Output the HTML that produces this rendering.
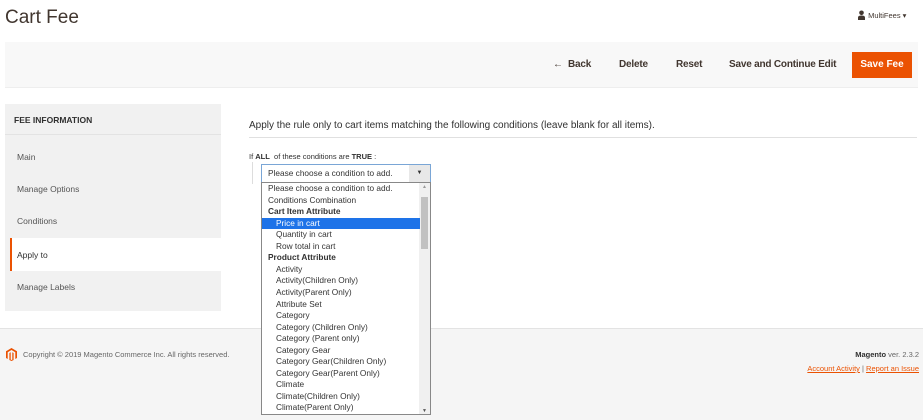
<!DOCTYPE html><html><head><style>
*{margin:0;padding:0;box-sizing:border-box}
body{width:923px;height:420px;overflow:hidden;background:#fff;font-family:"Liberation Sans",sans-serif;color:#303030;position:relative}
.a{position:absolute;white-space:nowrap}
.tb{font-size:10px;color:#41362f;top:59px;font-weight:bold;letter-spacing:-0.2px}
.sb{position:absolute;left:5px;top:104px;width:216px;height:207px;background:#f1f1f1}
.si{position:absolute;left:17px;font-size:8.5px;color:#555}
.li{position:absolute;left:0;width:158px;height:11.55px;font-size:8.3px;line-height:11.55px;color:#333;padding-left:6px}
</style></head><body>
<div class="a" style="left:5px;top:7px;font-size:19px;color:#41362f">Cart Fee</div>
<div class="a" style="left:857px;top:10px;font-size:7.5px;color:#41362f"><svg width="9" height="10" viewBox="0 0 9 10" style="vertical-align:-2px"><circle cx="4.5" cy="2.8" r="2.3" fill="#41362f"/><path d="M1 10V7.5Q1 5.5 4.5 5.5Q8 5.5 8 7.5V10Z" fill="#41362f"/></svg> MultiFees ▾</div>
<div class="a" style="left:5px;top:42px;width:913px;height:46px;background:#f8f8f8;border-bottom:1px solid #eee"></div>
<div class="a tb" style="left:553px">← &nbsp;Back</div>
<div class="a tb" style="left:619px">Delete</div>
<div class="a tb" style="left:676px">Reset</div>
<div class="a tb" style="left:729px">Save and Continue Edit</div>
<div class="a" style="left:852px;top:52px;width:60px;height:26px;background:#eb5202;color:#fff;font-size:10px;font-weight:bold;text-align:center;line-height:26px">Save Fee</div>
<div class="sb"></div>
<div class="a" style="left:5px;top:134px;width:216px;height:1px;background:#e3e3e3"></div>
<div class="si" style="top:115px;left:14px;font-weight:bold;color:#303030;font-size:8.5px">FEE INFORMATION</div>
<div class="si" style="top:152px">Main</div>
<div class="si" style="top:184px">Manage Options</div>
<div class="si" style="top:216px">Conditions</div>
<div class="a" style="left:10px;top:238px;width:211px;height:33px;background:#fff;border-left:2px solid #eb5202"></div>
<div class="si" style="top:250px;color:#303030">Apply to</div>
<div class="si" style="top:282px">Manage Labels</div>
<div class="a" style="left:249px;top:120px;font-size:10px;color:#303030">Apply the rule only to cart items matching the following conditions (leave blank for all items).</div>
<div class="a" style="left:249px;top:137px;width:668px;height:1px;background:#e0e0e0"></div>
<div class="a" style="left:249px;top:152px;font-size:7.5px">If <b>ALL</b> &nbsp;of these conditions are <b>TRUE</b> :</div>
<div class="a" style="left:0;top:328px;width:923px;height:92px;background:#f5f5f5;border-top:1px solid #e3e3e3"></div>
<svg class="a" style="left:6px;top:348px" width="11" height="13" viewBox="0 0 11 13"><path d="M5.5 0L11 3.2V10L9.3 11V4.2L5.5 2L1.7 4.2V11L0 10V3.2Z M6.3 4.2L7.6 5V12L5.5 13L3.4 12V5L4.7 4.2V11.6L5.5 12L6.3 11.6Z" fill="#eb5202"/></svg>
<div class="a" style="left:23px;top:350px;font-size:7.5px;color:#666">Copyright © 2019 Magento Commerce Inc. All rights reserved.</div>
<div class="a" style="right:4px;top:350px;font-size:7.5px;color:#666"><b style="color:#303030">Magento</b> ver. 2.3.2</div>
<div class="a" style="right:4px;top:364px;font-size:7.5px;color:#eb5202"><u>Account Activity</u> <span style="color:#666">|</span> <u>Report an Issue</u></div>
<div class="a" style="left:252px;top:162px;width:10px;height:22px;border-left:1px solid #ddd"></div>
<div class="a" style="left:261px;top:164px;width:170px;height:19px;border:1px solid #7aa6d6;background:#fff;font-size:8.3px;line-height:17px;padding-left:6px;color:#333">Please choose a condition to add.<span style="position:absolute;right:0;top:0;width:21px;height:17px;background:#e8e8e8;text-align:center;font-size:6px">▼</span></div>
<div class="a" style="left:261px;top:182px;width:170px;height:233px;border:1px solid #888;background:#fff;overflow:hidden">
<div style="position:absolute;right:0;top:0;width:11px;height:233px;background:#f0f0f0"><div style="position:absolute;left:2px;top:14px;width:7px;height:52px;background:#c1c1c1"></div><div style="position:absolute;top:1px;width:11px;text-align:center;font-size:5px;color:#999">▲</div><div style="position:absolute;bottom:2px;width:11px;text-align:center;font-size:5px;color:#555">▼</div></div>
<div style="position:absolute;left:0;top:0">
<div class="li" style="top:0">Please choose a condition to add.</div>
<div class="li" style="top:11.55px">Conditions Combination</div>
<div class="li" style="top:23.1px;font-weight:bold">Cart Item Attribute</div>
<div class="li" style="top:34.65px;background:#1e73e8;color:#fff;padding-left:14px">Price in cart</div>
<div class="li" style="top:46.2px;padding-left:14px">Quantity in cart</div>
<div class="li" style="top:57.75px;padding-left:14px">Row total in cart</div>
<div class="li" style="top:69.3px;font-weight:bold">Product Attribute</div>
<div class="li" style="top:80.85px;padding-left:14px">Activity</div>
<div class="li" style="top:92.4px;padding-left:14px">Activity(Children Only)</div>
<div class="li" style="top:103.95px;padding-left:14px">Activity(Parent Only)</div>
<div class="li" style="top:115.5px;padding-left:14px">Attribute Set</div>
<div class="li" style="top:127.05px;padding-left:14px">Category</div>
<div class="li" style="top:138.6px;padding-left:14px">Category (Children Only)</div>
<div class="li" style="top:150.15px;padding-left:14px">Category (Parent only)</div>
<div class="li" style="top:161.7px;padding-left:14px">Category Gear</div>
<div class="li" style="top:173.25px;padding-left:14px">Category Gear(Children Only)</div>
<div class="li" style="top:184.8px;padding-left:14px">Category Gear(Parent Only)</div>
<div class="li" style="top:196.35px;padding-left:14px">Climate</div>
<div class="li" style="top:207.9px;padding-left:14px">Climate(Children Only)</div>
<div class="li" style="top:219.45px;padding-left:14px">Climate(Parent Only)</div>
</div></div>
</body></html>
